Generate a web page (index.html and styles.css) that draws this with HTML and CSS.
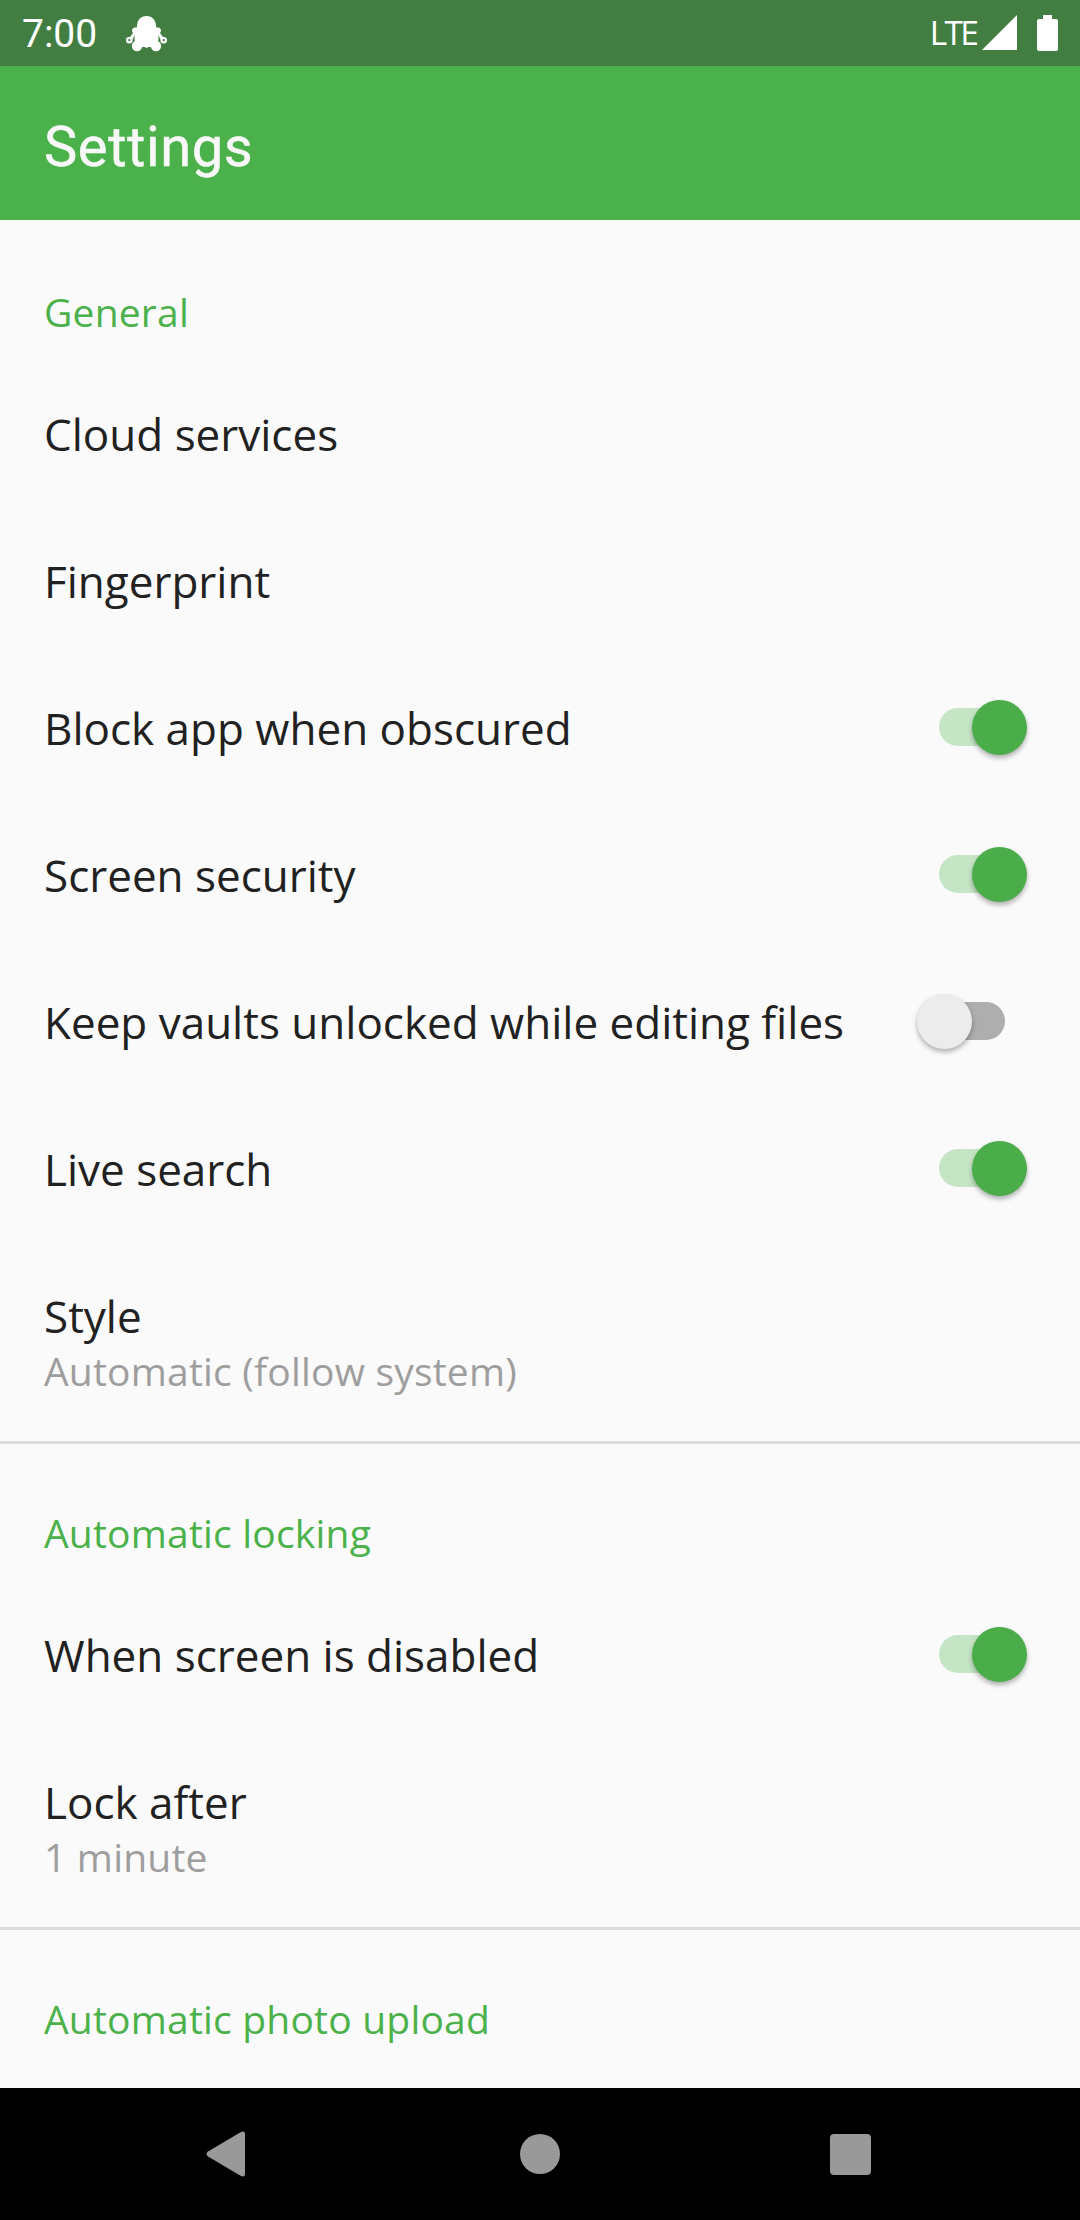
FILE: index.html
```html
<!DOCTYPE html>
<html lang="en">
<head>
<meta charset="utf-8">
<title>Settings</title>
<link rel="stylesheet" href="styles.css">
</head>
<body>
<div class="screen">
  <div class="status">
    <span class="clock">7:00</span>
    <svg class="notif" viewBox="0 0 41 36" width="41" height="36">
      <path d="M20.500 0C14.500 0 11 4.500 11 10.500L9 15 8.500 24 12 31H18.500L20.500 32 22.500 31H29L32.500 24 32 15 30 10.500C30 4.500 26.500 0 20.500 0Z" fill="#fff"/>
      <path d="M11 11.500H8.500Q6 12 6 15L7 17 3.300 22 6 24 10 17.500H11ZM30 11.500h2.500Q35 12 35 15L34 17 37.700 22 35 24 31 17.500H30Z" fill="#fff"/>
      <circle cx="11" cy="30" r="5.200" fill="#fff"/>
      <circle cx="30" cy="30" r="5.200" fill="#fff"/>
      <circle cx="3.300" cy="24.200" r="2.200" fill="none" stroke="#fff" stroke-width="2.200"/>
      <circle cx="37.700" cy="24.200" r="2.200" fill="none" stroke="#fff" stroke-width="2.200"/>
    </svg>
    <span class="lte">LTE</span>
    <svg class="signal" viewBox="0 0 35 35" width="35" height="35"><path d="M35 0V35H0Z" fill="#fff"/></svg>
    <svg class="battery" viewBox="0 0 21 36" width="21" height="36"><path d="M6 0h9v4h4q2 0 2 2v28q0 2-2 2H2q-2 0-2-2V6q0-2 2-2h4z" fill="#fff"/></svg>
  </div>
  <header class="appbar"><h1>Settings</h1></header>
  <main class="list">
    <section>
      <h2>General</h2>
      <div class="row"><span class="label">Cloud services</span></div>
      <div class="row"><span class="label">Fingerprint</span></div>
      <div class="row"><span class="label">Block app when obscured</span><i class="switch on"></i></div>
      <div class="row"><span class="label">Screen security</span><i class="switch on"></i></div>
      <div class="row"><span class="label">Keep vaults unlocked while editing files</span><i class="switch"></i></div>
      <div class="row"><span class="label">Live search</span><i class="switch on"></i></div>
      <div class="row tall"><span class="label">Style</span><span class="sub">Automatic (follow system)</span></div>
    </section>
    <section>
      <h2>Automatic locking</h2>
      <div class="row"><span class="label">When screen is disabled</span><i class="switch on"></i></div>
      <div class="row tall"><span class="label">Lock after</span><span class="sub">1 minute</span></div>
    </section>
    <section>
      <h2>Automatic photo upload</h2>
    </section>
  </main>
  <nav class="nav">
    <svg viewBox="0 0 40 46" width="40" height="46"><path d="M2 20.500 34.500 1.200Q39 -1 39 3.500V42.500Q39 47 34.500 44.800L2 25.500Q-1 23 2 20.500Z" fill="#999"/></svg>
    <svg class="home" viewBox="0 0 40 40" width="40" height="40"><circle cx="20" cy="20" r="20" fill="#999"/></svg>
    <svg viewBox="0 0 41 41" width="41" height="41"><rect width="41" height="41" rx="4" fill="#999"/></svg>
  </nav>
</div>
</body>
</html>
```
FILE: styles.css
```css
* { box-sizing: border-box; margin: 0; padding: 0; }
body { background: #fafafa; font-family: "Open Sans", sans-serif; }
.screen { width: 1080px; height: 2220px; display: flex; flex-direction: column; overflow: hidden; }
.status { height: 66px; background: #427e42; color: #fff; display: flex; align-items: flex-start; padding-left: 22px; font-family: Roboto, sans-serif; }
.clock { font-size: 39px; line-height: 46px; padding-top: 11px; width: 104px; }
.notif { margin-top: 16px; }
.lte { font: 33.5px/40px "Open Sans", sans-serif; letter-spacing: -2.8px; margin: 12px 6px 0 auto; }
.signal { margin-top: 15px; }
.battery { margin: 15px 22px 0 20px; }
.appbar { height: 154px; background: #4bb14b; padding: 45px 44px 0; }
.appbar h1 { font: 400 56px/72px Roboto, sans-serif; letter-spacing: .6px; color: #f8f8f8; -webkit-text-stroke: .5px #f8f8f8; }
.list { flex: 1; overflow: hidden; color: #212121; }
section + section { border-top: 3px solid #dcdcdc; }
h2 { height: 140px; padding: 65px 44px 0; font-size: 39px; line-height: 53px; font-weight: 400; letter-spacing: .2px; color: #4bb14b; }
section + section h2 { height: 137px; padding-top: 62px; }
.row { height: 147px; padding: 0 44px; display: flex; align-items: center; justify-content: space-between; }
.label { font-size: 44px; line-height: 60px; }
.tall { height: 199px; padding-top: 44px; flex-direction: column; align-items: flex-start; justify-content: flex-start; }
.sub { font-size: 39px; line-height: 53px; margin-top: -2px; letter-spacing: .2px; color: #9e9e9e; }
.switch { width: 66px; height: 38px; border-radius: 19px; background: #aeaeae; margin: 0 31px 1px 0; display: flex; align-items: center; }
.switch::before { content: ""; width: 55px; height: 55px; flex: none; border-radius: 50%; background: #ececec; margin-left: -22px; box-shadow: 0 3px 5px rgba(0,0,0,.3); }
.switch.on { background: #c5e5c5; }
.switch.on::before { background: #4aad4a; margin-left: 32.5px; }
.nav { height: 132px; background: #000; display: flex; align-items: center; justify-content: space-between; padding: 0 209px 0 206px; }
.home { margin-left: 4px; }
```
